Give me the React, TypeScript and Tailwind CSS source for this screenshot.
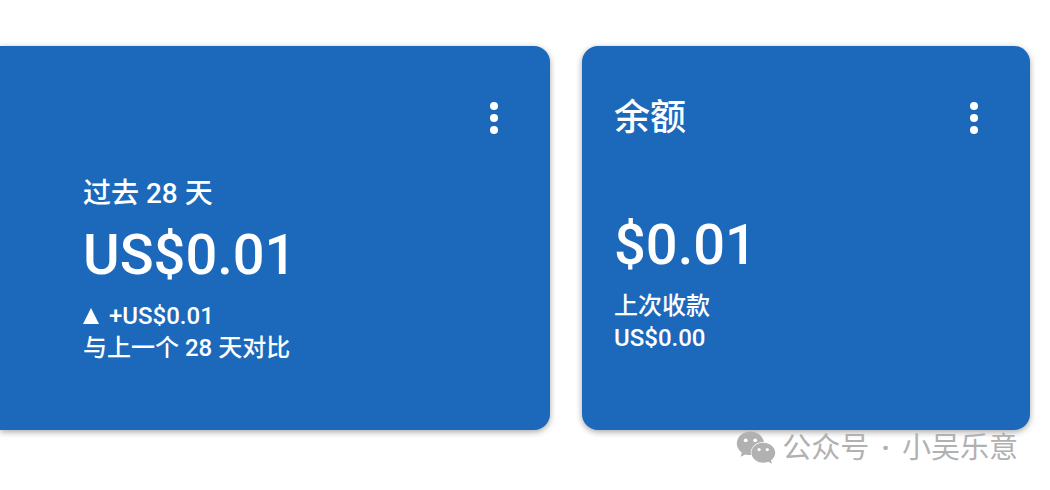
import type { ReactNode } from "react";

type StatCardProps = {
  title?: string;
  className: string;
  children: ReactNode;
};

function MoreIcon() {
  return (
    <svg width="8" height="32" viewBox="0 0 8 32" fill="currentColor" aria-hidden="true">
      <circle cx="4" cy="4" r="4" />
      <circle cx="4" cy="16" r="4" />
      <circle cx="4" cy="28" r="4" />
    </svg>
  );
}

function WechatIcon() {
  return (
    <svg width="40" height="34" viewBox="0 0 40 34" fill="currentColor" aria-hidden="true">
      <mask id="back-bubble">
        <rect width="40" height="34" fill="white" />
        <ellipse cx="27.3" cy="21.8" rx="12.6" ry="10.8" fill="black" />
        <circle cx="9.7" cy="9.3" r="1.9" fill="black" />
        <circle cx="19.2" cy="9.3" r="1.9" fill="black" />
      </mask>
      <path
        mask="url(#back-bubble)"
        d="M14.4 0.500C6.900.5.8 5.900.8 12.600c0 3.700 1.900 6.900 5 9.100l-1.200 4 4.800-2.300c1.600.4 3.200.7 5 .7 7.500 0 13.600-4.800 13.600-11.500S21.900.5 14.400.5z"
      />
      <mask id="front-bubble">
        <rect width="40" height="34" fill="white" />
        <circle cx="23.1" cy="18.6" r="1.6" fill="black" />
        <circle cx="31.3" cy="18.6" r="1.6" fill="black" />
      </mask>
      <path
        mask="url(#front-bubble)"
        d="M27.3 11.8c6.600 0 11.900 4.500 11.900 10 0 3.100-1.600 5.700-4.200 7.500l.9 3.500-3.800-2c-1.500.5-3.100.9-4.800.9-6.600 0-11.900-4.400-11.900-9.900s5.300-10 11.900-10z"
      />
    </svg>
  );
}

function StatCard({ title, className, children }: StatCardProps) {
  return (
    <section
      className={`flex h-96 flex-col bg-[#1c69bc] font-medium text-white shadow-[0_2px_6px_rgba(0,0,0,0.35)] ${className}`}
    >
      <header className="flex h-36 shrink-0 items-center justify-between pr-9 pl-8">
        <h2 className="text-4xl">{title}</h2>
        <button type="button" aria-label="More" className="flex w-10 justify-center">
          <MoreIcon />
        </button>
      </header>
      {children}
    </section>
  );
}

export default function App() {
  return (
    <main className="relative bg-white pt-[46px] pr-5 pb-[60px] font-['Roboto','Noto_Sans_CJK_SC',sans-serif]">
      <div className="grid grid-cols-[275fr_224fr] gap-8">
        <StatCard className="rounded-r-2xl">
          <div className="-mt-4 pl-[83px]">
            <p className="text-[28px] leading-10">过去 28 天</p>
            <p className="pt-1 pb-2 text-[56px] leading-[74px]">US$0.01</p>
            <p className="flex items-center gap-2.5 text-2xl leading-8">
              <svg width="16" height="16" viewBox="0 0 16 16" fill="currentColor" aria-hidden="true">
                <path d="M8 0l8 16H0z" />
              </svg>
              <span>+US$0.01</span>
            </p>
            <p className="text-2xl leading-8">与上一个 28 天对比</p>
          </div>
        </StatCard>
        <StatCard title="余额" className="rounded-2xl">
          <div className="pt-[18px] pl-8">
            <p className="pb-2 text-[56px] leading-[74px]">$0.01</p>
            <p className="text-2xl leading-8">上次收款</p>
            <p className="text-2xl leading-8">US$0.00</p>
          </div>
        </StatCard>
      </div>
      <div className="absolute right-8 bottom-[22px] flex items-center gap-1.5 text-[#b1b1b1]">
        <WechatIcon />
        <p className="flex gap-3 text-[29px] leading-10">
          <span>公众号</span>
          <span className="font-bold">·</span>
          <span>小吴乐意</span>
        </p>
      </div>
    </main>
  );
}
